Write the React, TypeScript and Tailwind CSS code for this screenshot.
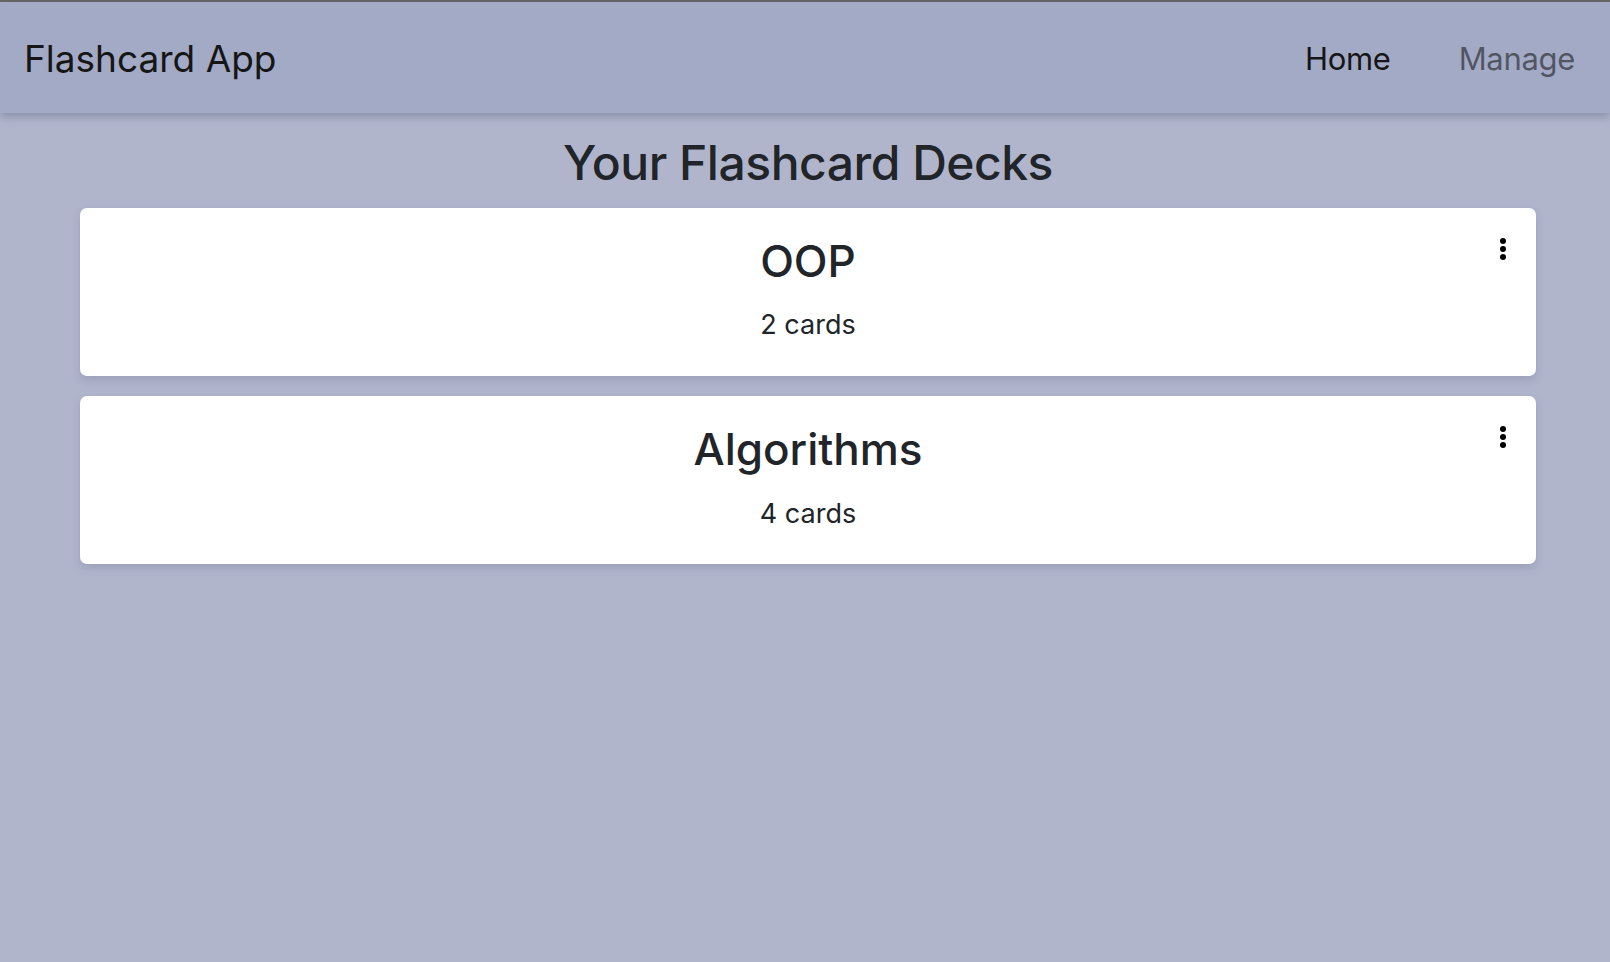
const decks = [
  { name: 'OOP', count: 2 },
  { name: 'Algorithms', count: 4 },
];

const DotsIcon = () => (
  <svg width="8" height="24" viewBox="0 0 8 24" fill="currentColor">
    <circle cx="4" cy="4" r="3" />
    <circle cx="4" cy="12" r="3" />
    <circle cx="4" cy="20" r="3" />
  </svg>
);

const DeckCard = ({ name, count }: { name: string; count: number }) => {
  return (
    <div className="relative rounded-[7px] bg-white pt-[27px] pb-[30px] text-center text-[#212529] shadow-[0_4px_8px_rgba(60,66,100,0.18)]">
      <button className="absolute top-[29px] right-[29px] text-black">
        <DotsIcon />
      </button>
      <h2 className="mb-[18px] text-[44px] leading-[1.2] font-medium">{name}</h2>
      <p className="text-[27px] leading-[1.5]">{count} cards</p>
    </div>
  );
};

export default function App() {
  return (
    <div className="min-h-[962px] w-full bg-[#b0b5cc] font-['Inter','Noto_Sans',sans-serif]">
      <div className="h-[2px] bg-[#666]" />
      <nav className="relative z-10 flex h-[111px] items-center justify-between bg-[#a3aac5] pt-[2px] pr-[35px] pl-[24px] shadow-[0_4px_8px_rgba(60,66,100,0.3)]">
        <span className="text-[37px] text-[#161616]">Flashcard App</span>
        <div className="flex items-center gap-[68px] pt-[2px] text-[31px] tracking-[-0.01em]">
          <a className="text-[#161616]">Home</a>
          <a className="text-black/50">Manage</a>
        </div>
      </nav>
      <main className="pr-[74px] pl-[80px]">
        <h1 className="mt-[21px] mb-[16px] text-center text-[48px] leading-[1.2] font-medium tracking-[-0.01em] text-[#212529]">
          Your Flashcard Decks
        </h1>
        <div className="flex flex-col gap-[20px]">
          {decks.map((d) => (
            <DeckCard key={d.name} name={d.name} count={d.count} />
          ))}
        </div>
      </main>
    </div>
  );
}
